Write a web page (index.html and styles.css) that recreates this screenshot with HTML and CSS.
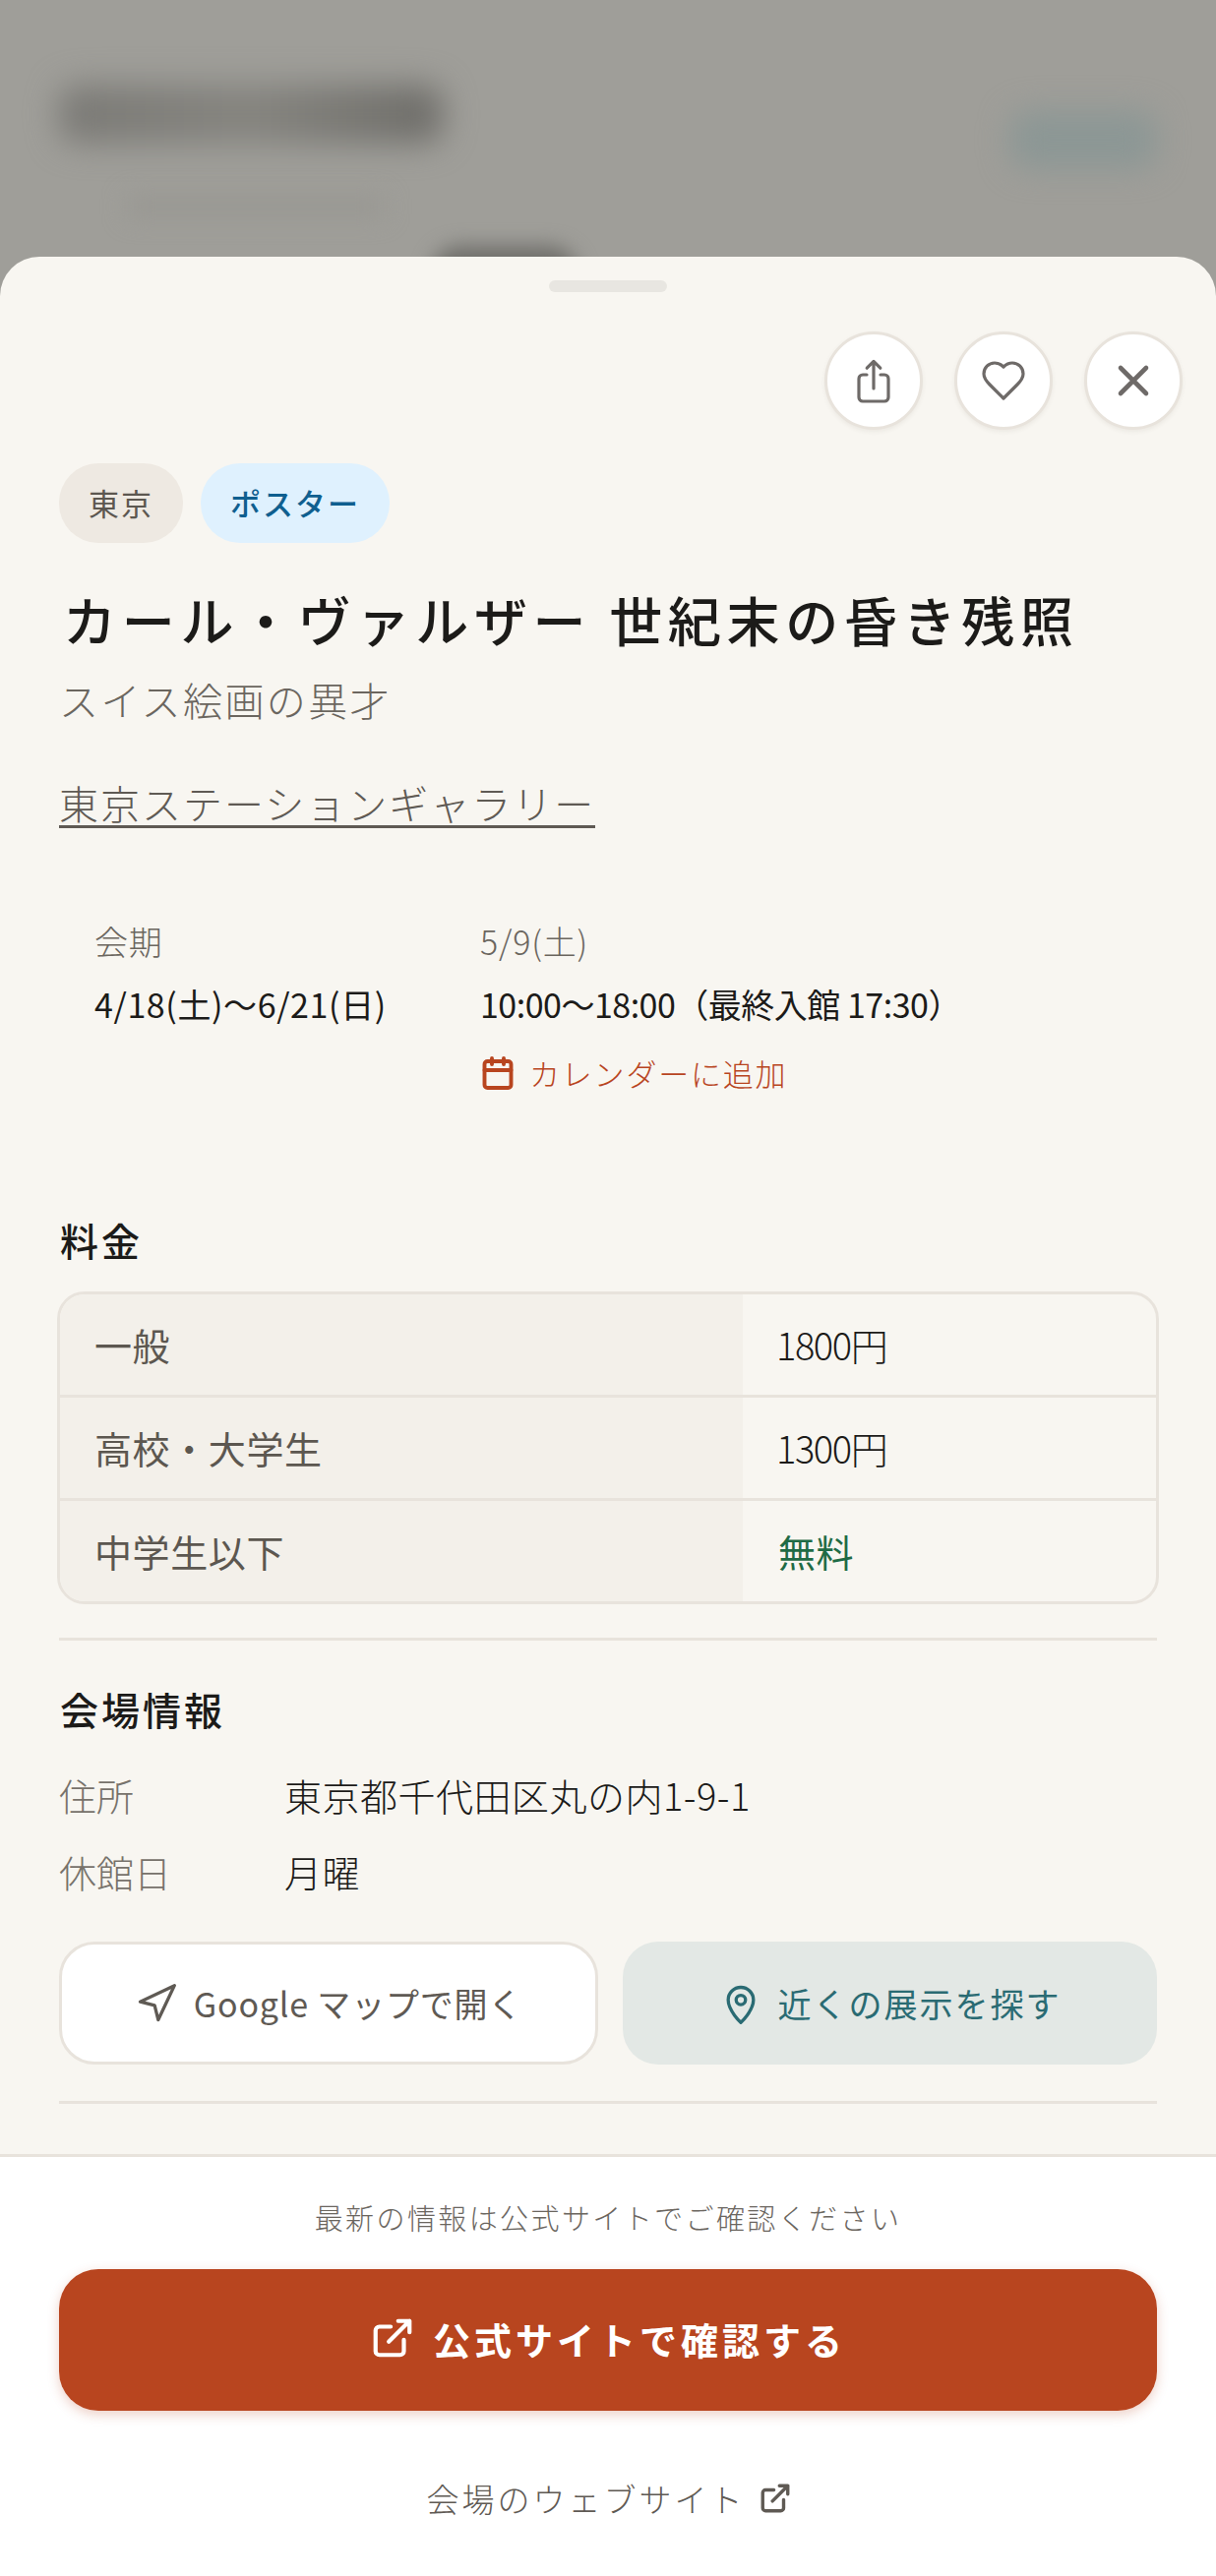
FILE: index.html
```html
<!DOCTYPE HTML>
<html lang="ja">
<head>
    <meta name="viewport" content="width=device-width, height=device-height, initial-scale=1.0">
    <link rel="stylesheet" href="styles.css">
</head>
<body>
    <div class="backdrop">
        <div class="backdrop-head">
            <div class="blur-title"></div>
            <div class="blur-button"></div>
        </div>
        <div class="blur-sub"></div>
        <div class="blur-tab"></div>
    </div>

    <div class="sheet">
        <div class="handle"></div>

        <div class="scroll">
            <div class="actions">
                <button class="round-btn">
                    <svg class="icon-48" viewBox="0 0 24 24"><path d="M12 2.2V16M8.6 5.6 12 2.2l3.4 3.4M8.5 9H6.5a2 2 0 0 0-2 2v9.5a2 2 0 0 0 2 2h11a2 2 0 0 0 2-2V11a2 2 0 0 0-2-2h-2"/></svg>
                </button>
                <button class="round-btn">
                    <svg class="icon-48" viewBox="0 0 24 24"><path d="M19 14c1.5-1.5 3-3.2 3-5.500A5.500 5.500 0 0 0 16.500 3c-1.800 0-3 .5-4.500 2-1.500-1.500-2.700-2-4.500-2A5.500 5.500 0 0 0 2 8.500c0 2.300 1.500 4 3 5.500l7 7Z"/></svg>
                </button>
                <button class="round-btn">
                    <svg class="icon-48 icon-close" viewBox="0 0 24 24"><path d="M5.500 5.500l13 13M18.500 5.500l-13 13"/></svg>
                </button>
            </div>

            <div class="tags">
                <span class="tag">東京</span>
                <span class="tag tag-blue">ポスター</span>
            </div>

            <h1 class="title">カール・ヴァルザー 世紀末の昏き残照</h1>
            <p class="subtitle">スイス絵画の異才</p>
            <a class="venue-link">東京ステーションギャラリー</a>

            <div class="dates">
                <div class="dates-col">
                    <div class="dates-label">会期</div>
                    <div class="dates-value dates-range">4/18(土)〜6/21(日)</div>
                </div>
                <div class="dates-col">
                    <div class="dates-label">5/9(土)</div>
                    <div class="dates-value dates-hours">10:00〜18:00（最終入館 17:30）</div>
                    <a class="calendar-link">
                        <svg class="icon-36" viewBox="0 0 24 24"><path d="M8 2v4M16 2v4"/><rect x="3" y="4" width="18" height="18" rx="2"/><path d="M3 10h18"/></svg>
                        カレンダーに追加
                    </a>
                </div>
            </div>

            <h2 class="heading heading-price">料金</h2>
            <div class="price-table">
                <div class="price-row">
                    <div class="price-name">一般</div>
                    <div class="price-value">1800円</div>
                </div>
                <div class="price-row">
                    <div class="price-name">高校・大学生</div>
                    <div class="price-value">1300円</div>
                </div>
                <div class="price-row">
                    <div class="price-name">中学生以下</div>
                    <div class="price-value price-free">無料</div>
                </div>
            </div>

            <hr class="divider divider-price">

            <h2 class="heading heading-venue">会場情報</h2>
            <div class="info-row">
                <div class="info-label">住所</div>
                <div class="info-value">東京都千代田区丸の内1-9-1</div>
            </div>
            <div class="info-row info-row-next">
                <div class="info-label">休館日</div>
                <div class="info-value">月曜</div>
            </div>

            <div class="venue-btns">
                <a class="venue-btn venue-btn-map">
                    <svg class="icon-40" viewBox="0 0 24 24"><polygon points="3 11 22 2 13 21 11 13 3 11"/></svg>
                    Google マップで開く
                </a>
                <a class="venue-btn venue-btn-near">
                    <svg class="icon-40" viewBox="0 0 24 24"><path d="M19 10c0 6-7 12.500-7 12.500S5 16 5 10a7 7 0 0 1 14 0Z"/><circle cx="12" cy="10" r="2.600"/></svg>
                    近くの展示を探す
                </a>
            </div>

            <hr class="divider divider-venue">
        </div>

        <div class="footer">
            <p class="footer-note">最新の情報は公式サイトでご確認ください</p>
            <a class="cta">
                <svg class="icon-44" viewBox="0 0 24 24"><path d="M18 13v6a2 2 0 0 1-2 2H5a2 2 0 0 1-2-2V8a2 2 0 0 1 2-2h6M15 3h6v6M10 14 21 3"/></svg>
                公式サイトで確認する
            </a>
            <a class="site-link">
                会場のウェブサイト
                <svg class="icon-34" viewBox="0 0 24 24"><path d="M18 13v6a2 2 0 0 1-2 2H5a2 2 0 0 1-2-2V8a2 2 0 0 1 2-2h6M15 3h6v6M10 14 21 3"/></svg>
            </a>
        </div>
    </div>
</body>
</html>
```

FILE: styles.css
```css
* {
    padding: 0;
    margin: 0;
    box-sizing: border-box;
}
html, body {
    width: 1236px;
    height: 2619px;
    overflow: hidden;
}
body {
    background-color: #9f9e99;
    font-family: "Noto Sans CJK JP", "Noto Sans", sans-serif;
    font-weight: 300;
    color: #1c1b19;
}
svg {
    fill: none;
    stroke: currentColor;
    stroke-width: 2;
    stroke-linecap: round;
    stroke-linejoin: round;
    flex-shrink: 0;
}
.icon-48 { width: 48px; height: 48px; stroke-width: 1.6; }
.icon-44 { width: 46px; height: 46px; stroke-width: 2.200; }
.icon-40 { width: 44px; height: 44px; stroke-width: 1.800; }
.icon-36 { width: 36px; height: 36px; stroke-width: 2.600; }
.icon-34 { width: 34px; height: 34px; stroke-width: 2.400; }
.icon-close { stroke-width: 2.300; }

/* page behind the sheet */
.backdrop {
    height: 261px;
    overflow: hidden;
    padding: 86px 60px 0 60px;
}
.backdrop-head {
    display: flex;
    justify-content: space-between;
    align-items: flex-start;
}
.blur-title {
    width: 390px;
    height: 60px;
    background: linear-gradient(90deg, #7b7a76 0%, #85847f 50%, #6e6d69 100%);
    border-radius: 20px;
    filter: blur(16px);
}
.blur-button {
    width: 150px;
    height: 60px;
    margin-top: 26px;
    background-color: #8c9795;
    border-radius: 20px;
    filter: blur(15px);
}
.blur-sub {
    width: 260px;
    height: 20px;
    margin: 28px 0 0 70px;
    background-color: #989792;
    filter: blur(12px);
}
.blur-tab {
    width: 150px;
    height: 60px;
    margin: 30px 0 0 378px;
    background-color: #6f6e6a;
    border-radius: 30px;
    filter: blur(10px);
}

.sheet {
    height: 2358px;
    display: flex;
    flex-direction: column;
    background-color: #f8f6f1;
    border-radius: 40px 40px 0 0;
    overflow: hidden;
}
.handle {
    flex-shrink: 0;
    width: 120px;
    height: 12px;
    margin: 24px auto 0;
    background-color: #e8e6e1;
    border-radius: 6px;
}
.scroll {
    flex: 1;
    overflow: hidden;
    padding: 0 60px;
}

.actions {
    display: flex;
    justify-content: flex-end;
    gap: 32px;
    margin: 40px -26px 0 0;
}
.round-btn {
    width: 100px;
    height: 100px;
    display: flex;
    align-items: center;
    justify-content: center;
    background-color: #fff;
    border: 3px solid #e8e3dc;
    border-radius: 50%;
    box-shadow: 0 2px 4px rgba(90, 80, 60, 0.08);
    color: #6e6a68;
}

.tags {
    display: flex;
    gap: 18px;
    margin-top: 34px;
}
.tag {
    height: 81px;
    line-height: 80px;
    padding: 0 30px;
    border-radius: 40px;
    background-color: #eee9e2;
    color: #5c5750;
    font-size: 31px;
    font-weight: 400;
    letter-spacing: 2px;
}
.tag-blue {
    background-color: #dff1fe;
    color: #0f5f8f;
    font-weight: 500;
}

.title {
    margin: 43px 0 0 4px;
    font-size: 54px;
    line-height: 70px;
    font-weight: 500;
    letter-spacing: 5.700px;
    white-space: nowrap;
}
.subtitle {
    margin-top: 21px;
    font-size: 40px;
    line-height: 50px;
    letter-spacing: 2.400px;
    color: #6b665f;
}
.venue-link {
    display: inline-block;
    margin-top: 57px;
    font-size: 40px;
    line-height: 46px;
    letter-spacing: 2px;
    color: #5f5a54;
    border-bottom: 3px solid #5f5a54;
}

.dates {
    display: flex;
    margin-top: 95px;
    padding-left: 36px;
}
.dates-col:first-child {
    width: 392px;
}
.dates-label {
    font-size: 34px;
    line-height: 40px;
    letter-spacing: 0.800px;
    color: #6b665f;
}
.dates-value {
    margin-top: 22px;
    font-size: 34px;
    line-height: 44px;
    font-weight: 400;
    white-space: nowrap;
}
.dates-range {
    letter-spacing: 0.600px;
}
.dates-hours {
    letter-spacing: -0.500px;
}
.calendar-link {
    display: flex;
    align-items: center;
    gap: 14px;
    margin-top: 28px;
    font-size: 31px;
    line-height: 40px;
    letter-spacing: 1.800px;
    color: #b8451f;
}

.heading {
    margin-left: 1px;
    font-size: 39px;
    line-height: 50px;
    font-weight: 500;
    letter-spacing: 3px;
}
.heading-price {
    margin-top: 124px;
}
.heading-venue {
    margin-top: 44px;
}

.price-table {
    margin: 28px -2px 0;
    background-color: #f8f6f1;
    border: 3px solid #e8e3dc;
    border-radius: 28px;
    overflow: hidden;
}
.price-row {
    display: grid;
    grid-template-columns: 694px 1fr;
    height: 105px;
    border-bottom: 3px solid #e8e3dc;
    font-size: 38px;
    line-height: 102px;
}
.price-row:last-child {
    height: 102px;
    border-bottom: 0;
}
.price-name {
    padding-left: 35px;
    background-color: #f3f0ea;
    color: #5c5750;
    font-weight: 400;
    letter-spacing: 0.600px;
}
.price-value {
    padding-left: 34px;
    letter-spacing: -1.400px;
}
.price-free {
    padding-left: 36px;
    color: #1f6b45;
    font-weight: 400;
    letter-spacing: 0.500px;
}

.divider {
    border: 0;
    height: 3px;
    background-color: #e8e3dc;
}
.divider-price {
    margin-top: 34px;
}
.divider-venue {
    margin-top: 37px;
}

.info-row {
    display: flex;
    margin-top: 39px;
    font-size: 38px;
    line-height: 48px;
}
.info-row-next {
    margin-top: 30px;
}
.info-label {
    width: 229px;
    color: #77726b;
}
.info-value {
    letter-spacing: 0.500px;
}

.venue-btns {
    display: grid;
    grid-template-columns: 548px 1fr;
    gap: 25px;
    margin-top: 47px;
}
.venue-btn {
    height: 125px;
    display: flex;
    align-items: center;
    justify-content: center;
    gap: 16px;
    border-radius: 36px;
    font-size: 34px;
    letter-spacing: 0.800px;
    white-space: nowrap;
}
.venue-btn-map {
    background-color: #fff;
    border: 3px solid #e8e3dc;
    color: #5f5a54;
    font-weight: 400;
}
.venue-btn-near {
    background-color: #e3e8e5;
    color: #2a6b73;
    font-weight: 400;
    letter-spacing: 2px;
}

.footer {
    flex-shrink: 0;
    height: 429px;
    padding: 41px 60px 0;
    background-color: #fff;
    border-top: 3px solid #e8e3dc;
    text-align: center;
}
.footer-note {
    font-size: 29px;
    line-height: 40px;
    letter-spacing: 2.400px;
    color: #6b665f;
}
.cta {
    height: 144px;
    display: flex;
    align-items: center;
    justify-content: center;
    gap: 18px;
    margin-top: 33px;
    padding-bottom: 4px;
    background-color: #b8451f;
    border-radius: 40px;
    box-shadow: 0 4px 12px rgba(184, 69, 31, 0.25);
    color: #fff;
    font-size: 38px;
    font-weight: 700;
    letter-spacing: 4px;
}
.site-link {
    display: flex;
    align-items: center;
    justify-content: center;
    gap: 13px;
    margin-top: 67px;
    padding-left: 2px;
    font-size: 33px;
    line-height: 44px;
    letter-spacing: 3px;
    color: #5f5a54;
}
```
